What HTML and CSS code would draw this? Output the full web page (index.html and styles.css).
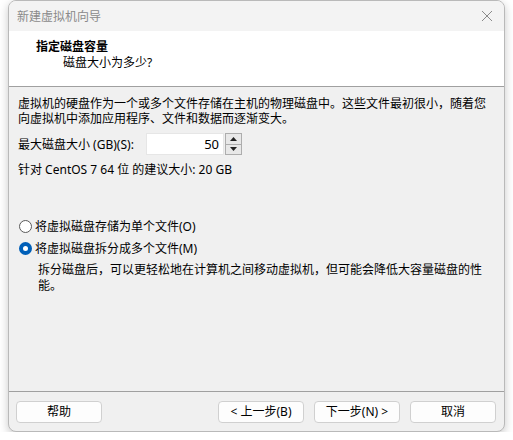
FILE: index.html
```html
<!DOCTYPE html>
<html lang="zh-CN">
<head>
<meta charset="utf-8">
<title>新建虚拟机向导</title>
<link rel="stylesheet" href="styles.css">
</head>
<body>
<div class="window">
  <div class="titlebar">
    <span class="title">新建虚拟机向导</span>
    <span class="close" aria-label="关闭">
      <svg width="12" height="12" viewBox="0 0 12 12"><path d="M1 1 L11 11 M11 1 L1 11" stroke="#8a8a8a" stroke-width="1" fill="none"/></svg>
    </span>
  </div>
  <div class="header">
    <div class="h-title">指定磁盘容量</div>
    <div class="h-sub">磁盘大小为多少?</div>
  </div>
  <div class="content">
    <p class="intro">虚拟机的硬盘作为一个或多个文件存储在主机的物理磁盘中。这些文件最初很小，随着您向虚拟机中添加应用程序、文件和数据而逐渐变大。</p>
    <div class="field">
      <label class="field-label">最大磁盘大小 (GB)(S):</label>
      <div class="input">50</div>
      <div class="spin">
        <div class="spin-btn"><svg width="7" height="4" viewBox="0 0 7 4"><path d="M0 4 L3.5 0 L7 4 Z" fill="#222"/></svg></div>
        <div class="spin-btn"><svg width="7" height="4" viewBox="0 0 7 4"><path d="M0 0 L3.5 4 L7 0 Z" fill="#222"/></svg></div>
      </div>
    </div>
    <div class="hint">针对 CentOS 7 64 位 的建议大小: 20 GB</div>
    <div class="radio-row first"><span class="radio"></span><span>将虚拟磁盘存储为单个文件(O)</span></div>
    <div class="radio-row"><span class="radio checked"></span><span>将虚拟磁盘拆分成多个文件(M)</span></div>
    <p class="desc">拆分磁盘后，可以更轻松地在计算机之间移动虚拟机，但可能会降低大容量磁盘的性能。</p>
  </div>
  <div class="footer">
    <button class="btn">帮助</button>
    <div class="spacer"></div>
    <button class="btn">&lt; 上一步(B)</button>
    <button class="btn">下一步(N) &gt;</button>
    <button class="btn">取消</button>
  </div>
</div>
</body>
</html>
```

FILE: styles.css
```css
html, body {
  margin: 0;
  padding: 0;
  background: #ffffff;
}
body {
  font-family: "Noto Sans", "Noto Sans CJK SC", sans-serif;
  font-size: 12px;
  color: #000;
}
.window {
  margin-left: 8px;
  width: 497px;
  height: 432px;
  box-sizing: border-box;
  border: 1px solid #b9b9b9;
  border-radius: 8px;
  background: #f0f0f0;
  box-shadow: 0 3px 10px rgba(0,0,0,0.22);
  display: flex;
  flex-direction: column;
  overflow: hidden;
}
.titlebar {
  height: 30px;
  display: flex;
  align-items: center;
  justify-content: space-between;
  padding: 0 11px 0 8px;
  background: #f3f3f3;
}
.title {
  color: #8a8a8a;
  font-size: 12px;
}
.close {
  display: flex;
  align-items: center;
}
.header {
  background: #ffffff;
  height: 56px;
  box-sizing: border-box;
  padding: 7px 0 0 27px;
  border-bottom: 1px solid #a0a0a0;
}
.h-title {
  font-weight: bold;
  line-height: 17px;
}
.h-sub {
  line-height: 16px;
  padding-left: 27px;
}
.content {
  flex: 1;
  padding: 0 12px 0 9px;
}
.intro {
  margin: 9px 0 0;
  line-height: 15px;
}
.field {
  margin-top: 7px;
  display: flex;
  align-items: center;
  height: 22px;
}
.field-label {
  width: 128px;
}
.input {
  width: 78px;
  height: 22px;
  box-sizing: border-box;
  background: #fff;
  border: 1px solid #e6e6e6;
  text-align: right;
  padding-right: 4px;
  line-height: 20px;
  font-size: 13px;
}
.spin {
  margin-left: 1px;
  width: 17px;
  height: 22px;
  box-sizing: border-box;
  border: 1px solid #adadad;
  display: flex;
  flex-direction: column;
  background: #e8e8e8;
}
.spin-btn {
  flex: 1;
  display: flex;
  align-items: center;
  justify-content: center;
}
.spin-btn + .spin-btn {
  border-top: 1px solid #adadad;
}
.hint {
  margin-top: 7px;
  line-height: 16px;
}
.radio-row {
  display: flex;
  align-items: center;
  height: 16px;
  margin-top: 6px;
}
.radio-row.first {
  margin-top: 40px;
}
.radio {
  width: 13px;
  height: 13px;
  box-sizing: border-box;
  border: 1px solid #5a5a5a;
  border-radius: 50%;
  background: #fff;
  margin: 0 3px 0 1px;
}
.radio.checked {
  border: 4px solid #005fb8;
  background: #fff;
}
.desc {
  margin: 6px 0 0 20px;
  line-height: 16px;
}
.footer {
  border-top: 1px solid #a0a0a0;
  padding: 9px 8px 8px 7px;
  display: flex;
  gap: 10px;
}
.spacer {
  flex: 1;
}
.btn {
  width: 86px;
  height: 22px;
  box-sizing: border-box;
  background: #fdfdfd;
  border: 1px solid #d0d0d0;
  border-radius: 4px;
  font-family: inherit;
  font-size: 12px;
  color: #000;
  padding: 0;
  line-height: 20px;
}
```
